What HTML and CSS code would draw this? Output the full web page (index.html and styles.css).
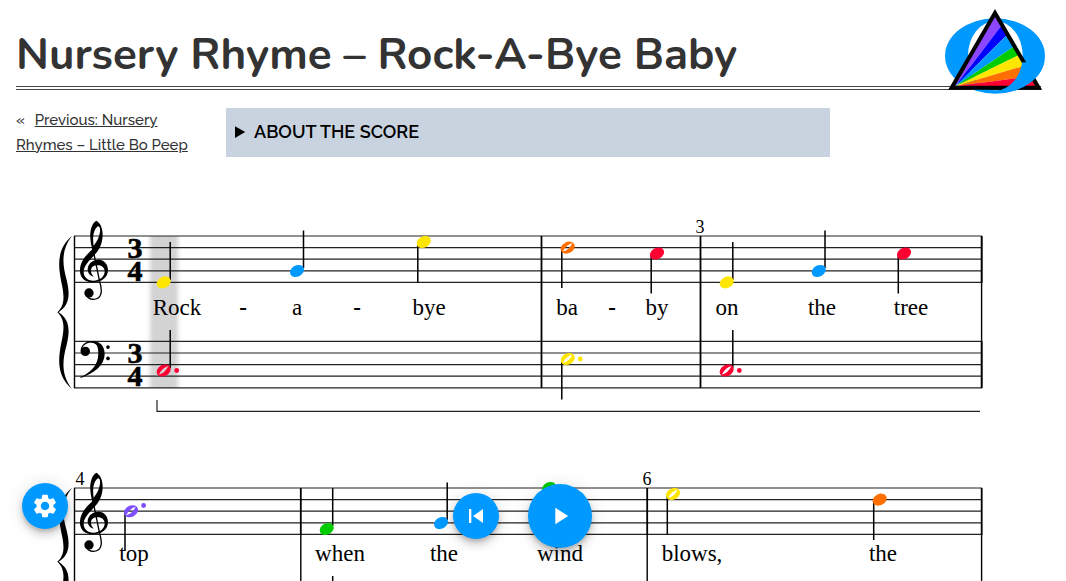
FILE: index.html
```html
<!DOCTYPE html>
<html lang="en">
<head>
  <meta charset="UTF-8">
  <meta name="viewport" content="width=device-width, initial-scale=1">
  <title>Nursery Rhyme – Rock-A-Bye Baby</title>
  <link rel="stylesheet" href="styles.css">
</head>
<body>
  <header class="page-header">
    <h1>Nursery Rhyme – Rock-A-Bye Baby</h1>
    <svg class="logo" viewBox="45 28 300 255" role="img" aria-label="Logo">
      <defs>
        <clipPath id="front"><rect x="216" y="188" width="140" height="110"/></clipPath>
        <clipPath id="inside"><path d="M195 48L320 262H70z"/></clipPath>
        <path id="ring" fill-rule="evenodd" d="M45 169a150 113 0 1 0 300 0a150 113 0 1 0 -300 0zM114 168a82 104 0 1 0 164 0a82 104 0 1 0 -164 0z"/>
      </defs>
      <use href="#ring" fill="#09f"/>
      <g clip-path="url(#inside)">
        <path fill="#8c46ff" d="M60 262L180 10L240 44L76 260z"/>
        <path fill="#00f" d="M76 260L240 44L270 67z"/>
        <path fill="#09f" d="M76 260L270 67L322 93z"/>
        <path fill="#0c0" d="M76 260L322 93L340 130z"/>
        <path fill="#ffe600" d="M76 260L340 130L340 181z"/>
        <path fill="#ff7000" d="M76 260L340 181L340 225z"/>
        <path fill="#f03" d="M76 260L340 225V262z"/>
      </g>
      <path d="M195 40L326 264H65z" fill="none" stroke="#000" stroke-width="12"/>
      <use href="#ring" fill="#09f" clip-path="url(#front)"/>
    </svg>
  </header>

  <div class="intro">
    <nav class="prev-link">« <a href="#prev">Previous: Nursery Rhymes – Little Bo Peep</a></nav>
    <details class="about">
      <summary>ABOUT THE SCORE</summary>
    </details>
  </div>

  <main class="score">
    <svg viewBox="0 0 1066 424">
      <defs>
        <filter id="soft" x="-30%" y="-5%" width="160%" height="110%"><feGaussianBlur stdDeviation="2 0"/></filter>
        <path id="staff" d="M74 0H982M74 11.6H982M74 23.2H982M74 34.8H982M74 46.4H982"/>
        <ellipse id="head" rx="7.4" ry="5.6" transform="rotate(-28)"/>
        <path id="half" fill-rule="evenodd" transform="rotate(-28)" d="M-7.4 0a7.4 5.6 0 1 0 14.8 0a7.4 5.6 0 1 0 -14.8 0zM-6.2 1.2Q0 -3 6.200 -1.800Q0 3 -6.200 1.200z"/>
        <g id="treble" transform="scale(.3333)">
          <path d="M139 -46C126 -39 119 -16 121 5C122 22 125 33 127 40C111 55 90 74 90 103C89 126 106 139 129 139C154 139 174 125 174 102C174 84 162 71 146 71C127 71 113 84 113 100C113 111 120 120 131 122C125 115 123 110 123 104C123 93 131 88 143 88C156 88 164 96 164 106C164 122 150 134 130 134C112 134 101 122 101 108C101 88 122 70 138 52C152 36 158 17 158 -5C158 -23 151 -40 139 -46zM144 -29C149 -29 151 -22 150 -13C148 3 142 15 131 29C127 5 130 -20 144 -29z"/>
          <path d="M128 35L149 137C159 168 154 190 130 190C119 190 112 184 110 178" fill="none" stroke="#000" stroke-width="4"/>
          <circle cx="117" cy="171" r="14"/>
        </g>
        <g id="bass" transform="scale(.3333)">
          <circle cx="106" cy="30" r="14"/>
          <path d="M92 30C91 12 106 -1 126 -1C149 -1 164 13 164 38C164 72 133 96 92 110L91 107C124 92 145 70 145 36C145 14 139 4 124 4C111 4 101 10 97 20z"/>
          <circle cx="174" cy="17" r="5.5"/>
          <circle cx="174" cy="51" r="5.5"/>
        </g>
        <path id="brace" transform="scale(.3333)" d="M66 0C20 38 24 88 34 138C44 183 44 208 22 229C44 250 44 275 34 320C24 370 20 420 66 459C34 418 36 376 50 326C62 276 56 250 26 229C56 208 62 182 50 132C36 82 34 40 66 0z"/>
      </defs>

      <!-- measures 1-3 -->
      <g transform="translate(0 78)">
        <rect class="cursor" x="150" width="28" height="152" filter="url(#soft)"/>
        <use href="#staff" class="line"/>
        <use href="#staff" class="line" y="105.4"/>
        <path class="bar thin" d="M74.5 0V152M981.6 0V152"/>
        <path class="bar" d="M541.5 0V152M700.5 0V152M981.7 0V47M981.7 105V152"/>
        <use href="#brace" x="50"/>
        <use href="#treble" x="50"/>
        <use href="#bass" x="50" y="105.4"/>
        <g class="meter">
          <text x="135" y="22">3</text><text x="135" y="45">4</text>
          <text x="135" y="127">3</text><text x="135" y="150">4</text>
        </g>
        <text class="number" x="700" y="-3">3</text>
        <path class="stem" d="M170.2 6V44M303.5 -5.5V32M417.8 8V46.4M561.8 13V52M651.2 19V57.5M732.8 6V44M825 -5.5V32M898.3 19V57.5"/>
        <path class="stem" d="M170.2 94V132M561.8 126V163.5M732.8 94V132"/>
        <use href="#head" class="yellow" x="163.7" y="46.4"/>
        <use href="#head" class="blue" x="297" y="35"/>
        <use href="#head" class="yellow" x="423.7" y="6"/>
        <use href="#half" class="orange" x="567.7" y="11.6"/>
        <use href="#head" class="red" x="657" y="17.5"/>
        <use href="#head" class="yellow" x="726.7" y="46.4"/>
        <use href="#head" class="blue" x="818.7" y="35"/>
        <use href="#head" class="red" x="904" y="17.5"/>
        <use href="#half" class="red" x="163.7" y="134.5"/>
        <circle class="red" cx="176.7" cy="134.5" r="2.4"/>
        <use href="#half" class="yellow" x="567.7" y="123"/>
        <circle class="yellow" cx="580.3" cy="123" r="2.4"/>
        <use href="#half" class="red" x="726.7" y="134.5"/>
        <circle class="red" cx="739.3" cy="134.5" r="2.4"/>
        <g class="lyrics">
          <text x="177" y="79">Rock</text>
          <text class="hyphen" x="243" y="79">-</text>
          <text x="297" y="79">a</text>
          <text class="hyphen" x="357" y="79">-</text>
          <text x="429" y="79">bye</text>
          <text x="567" y="79">ba</text>
          <text class="hyphen" x="612" y="79">-</text>
          <text x="657" y="79">by</text>
          <text x="727" y="79">on</text>
          <text x="822" y="79">the</text>
          <text x="911" y="79">tree</text>
        </g>
        <path class="pedal" d="M157 164V175.3H980"/>
      </g>

      <!-- measures 4-6 -->
      <g transform="translate(0 330)">
        <use href="#staff" class="line"/>
        <path class="bar thin" d="M74.5 0V147M300.8 46V147M647.2 46V147M981.6 46V147"/>
        <path class="bar" d="M300.8 0V47M647.2 0V47M981.7 0V47"/>
        <use href="#brace" x="50" transform="scale(1 .966)"/>
        <use href="#treble" x="50"/>
        <text class="number" x="80" y="-3">4</text>
        <text class="number" x="647" y="-3">6</text>
        <path class="stem" d="M125 25V63M332.7 0V38M447.2 -5.5V32M543 2V40M667.3 8V46M873.7 13V52M332.7 88V126"/>
        <use href="#half" class="purple" x="131" y="23.2"/>
        <circle class="purple" cx="143.6" cy="17.5" r="2.4"/>
        <use href="#head" class="green" x="326.7" y="41"/>
        <use href="#head" class="blue" x="441" y="35"/>
        <use href="#head" class="green" x="549" y="0"/>
        <use href="#half" class="yellow" x="673" y="6"/>
        <use href="#head" class="orange" x="879.7" y="11.6"/>
        <g class="lyrics">
          <text x="134" y="73">top</text>
          <text x="340" y="73">when</text>
          <text x="444" y="73">the</text>
          <text x="560" y="73">wind</text>
          <text x="692" y="73">blows,</text>
          <text x="883" y="73">the</text>
        </g>
      </g>
    </svg>
  </main>

  <button class="round settings" type="button" aria-label="Settings">
    <svg viewBox="0 0 24 24"><path d="M19.14 12.94c.04-.3.06-.61.06-.94s-.02-.64-.07-.94l2.03-1.58c.18-.14.23-.41.12-.61l-1.92-3.32c-.12-.22-.37-.29-.59-.22l-2.39.96c-.5-.38-1.03-.7-1.62-.94l-.36-2.54c-.04-.24-.24-.41-.48-.41h-3.84c-.24 0-.43.17-.47.41l-.36 2.54c-.59.24-1.13.57-1.62.94l-2.39-.96c-.22-.08-.47 0-.59.22L2.74 8.87c-.12.21-.08.47.12.61l2.03 1.58c-.05.3-.09.63-.09.94s.02.64.07.94l-2.03 1.58c-.18.14-.23.41-.12.61l1.92 3.32c.12.22.37.29.59.22l2.39-.96c.5.38 1.03.7 1.62.94l.36 2.54c.05.24.24.41.48.41h3.84c.24 0 .44-.17.47-.41l.36-2.54c.59-.24 1.13-.56 1.62-.94l2.39.96c.22.08.47 0 .59-.22l1.92-3.32c.12-.22.07-.47-.12-.61zM12 15.6c-1.98 0-3.6-1.62-3.6-3.6s1.62-3.6 3.6-3.6 3.6 1.62 3.6 3.6-1.62 3.6-3.6 3.6z"/></svg>
  </button>
  <div class="player">
    <button class="round" type="button" aria-label="Back to start">
      <svg viewBox="0 0 24 24"><path d="M6 6h2v12H6zm3.500 6l8.500 6V6z"/></svg>
    </button>
    <button class="round play" type="button" aria-label="Play">
      <svg viewBox="0 0 24 24"><path d="M8 5v14l11-7z"/></svg>
    </button>
  </div>
</body>
</html>
```
FILE: styles.css
```css
* { box-sizing: border-box; }
body {
  display: flex;
  flex-direction: column;
  height: 100vh;
  margin: 0;
  overflow: hidden;
  background: #fff;
  color: #333;
  font-family: Raleway, Lato, sans-serif;
}

.page-header {
  position: relative;
  margin: 0 25px 0 16px;
  padding-top: 24px;
  border-bottom: 4px double #444;
}
.page-header h1 {
  margin: 0;
  font: 700 44px/62px Nunito, Lato, sans-serif;
}
.logo {
  position: absolute;    /* hangs over the rule */
  top: 9px;
  right: -4px;
  width: 100px;
  height: 85px;
}

.intro {
  display: grid;
  grid-template-columns: 194px minmax(0, 604px);
  gap: 16px;
  align-items: start;
  margin: 18px 16px 0;
}
.prev-link { font-size: 15px; font-weight: 500; line-height: 25px; }
.prev-link a { margin-left: 6px; color: #333; }
.about { background: #c8d3df; color: #000; }
.about summary {
  padding: 11px 9px 13px;
  font-size: 18px;
  font-weight: 600;
  line-height: 25px;
  cursor: pointer;
}

.score { flex: 1; min-height: 0; overflow: hidden; }
.score svg { display: block; width: 100%; }
.line { stroke: #222; stroke-width: 1.2; }
.bar { stroke: #000; stroke-width: 1.8; }
.thin { stroke-width: 1.4; }
.stem { stroke: #000; stroke-width: 1.5; }
.pedal { fill: none; stroke: #222; stroke-width: 1.2; }
.cursor { fill: #d3d3d3; }
.score text {
  fill: #000;
  font-family: "Liberation Serif", "Times New Roman", serif;
  text-anchor: middle;
}
.lyrics text { font-size: 23px; }
.lyrics .hyphen { font-weight: bold; }
.score .number { font-size: 18px; }
.meter text {
  font-size: 30px;
  font-weight: bold;
  stroke: #000;
  stroke-width: 0.6;
}

.yellow { fill: #ffe600; }
.blue { fill: #09f; }
.orange { fill: #ff7000; }
.red { fill: #f03; }
.green { fill: #0c0; }
.purple { fill: #7f4fff; }

.round {
  display: flex;
  align-items: center;
  justify-content: center;
  width: 46px;
  height: 46px;
  padding: 0;
  border: 0;
  border-radius: 50%;
  background: #09f;
  box-shadow: 0 3px 5px -1px rgba(0,0,0,0.2), 0 6px 10px rgba(0,0,0,0.14), 0 1px 18px rgba(0,0,0,0.12);
  cursor: pointer;
}
.round svg { width: 28px; height: 28px; fill: #fff; }
.play { width: 64px; height: 64px; }
.settings { position: fixed; left: 22px; bottom: 52px; }
.player {
  position: fixed;
  right: 21px;
  bottom: 33px;
  left: 0;
  display: flex;
  align-items: center;
  justify-content: center;
  gap: 29px;
}
```
